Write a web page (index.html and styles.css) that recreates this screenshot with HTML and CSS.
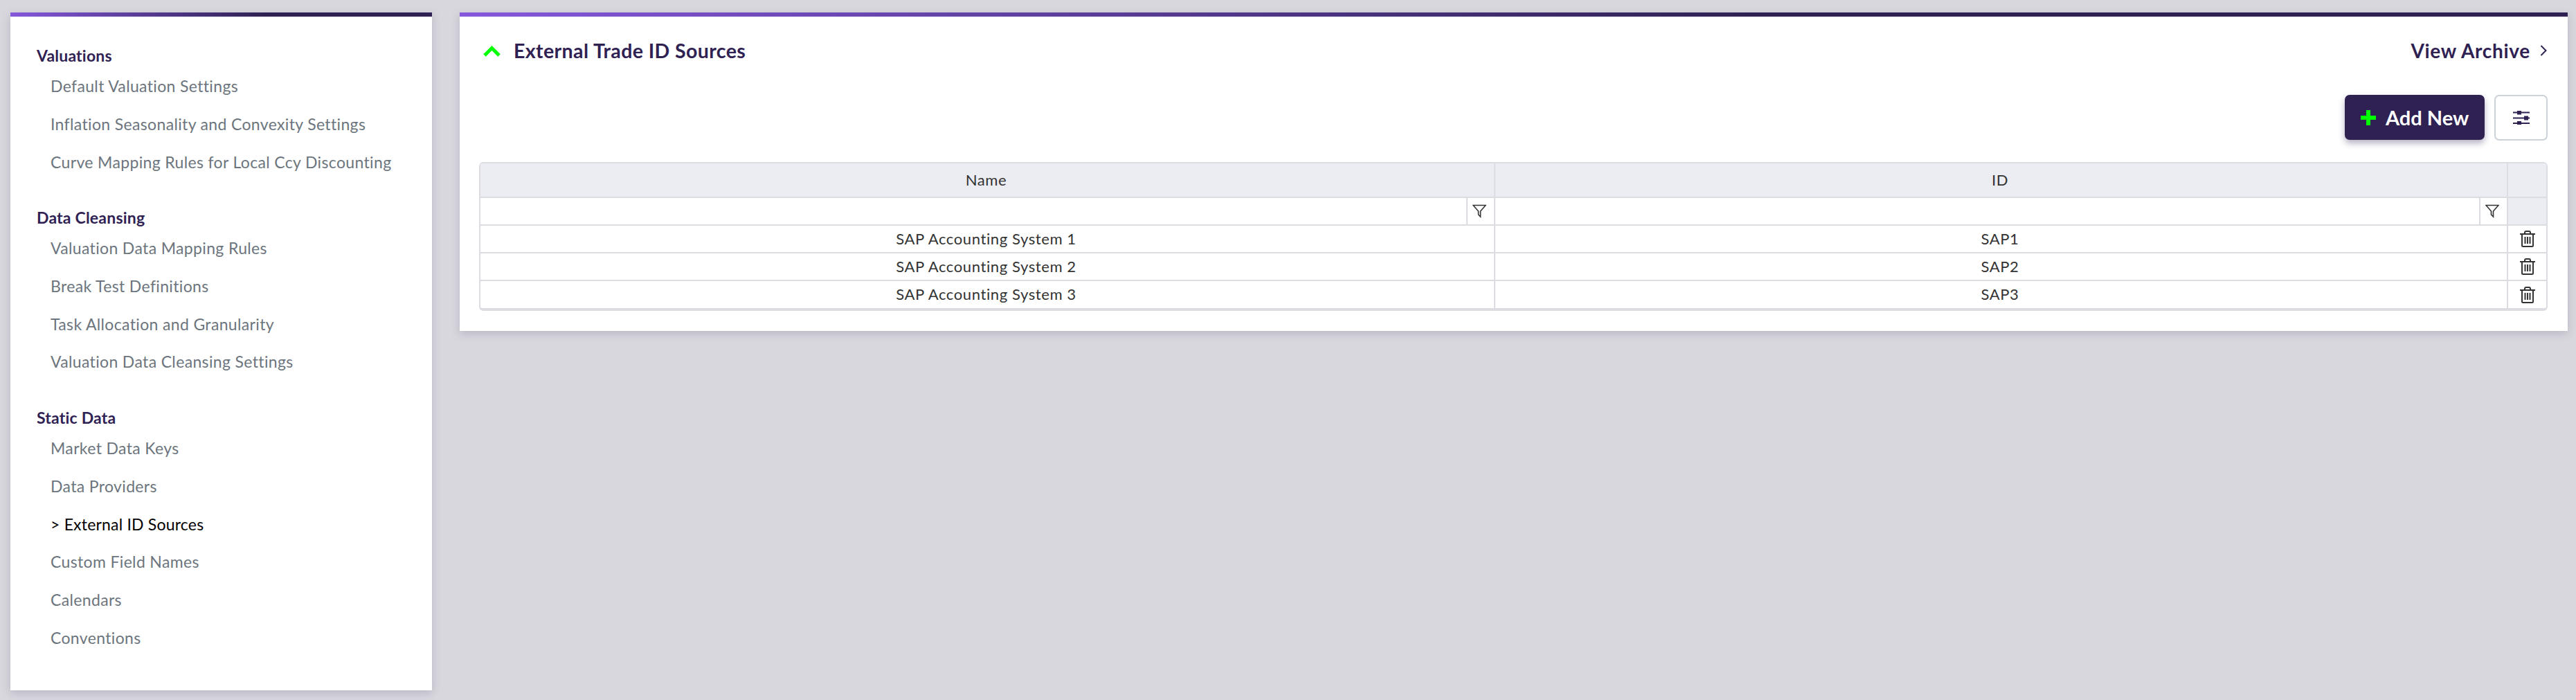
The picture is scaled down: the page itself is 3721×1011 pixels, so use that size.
FILE: index.html
```html
<!DOCTYPE html>
<html lang="en">
<head>
<meta charset="utf-8">
<title>External Trade ID Sources</title>
<link rel="stylesheet" href="styles.css">
</head>
<body>
<aside class="sidebar card">
  <section class="group">
    <h3>Valuations</h3>
    <a>Default Valuation Settings</a>
    <a>Inflation Seasonality and Convexity Settings</a>
    <a>Curve Mapping Rules for Local Ccy Discounting</a>
  </section>
  <section class="group">
    <h3>Data Cleansing</h3>
    <a>Valuation Data Mapping Rules</a>
    <a>Break Test Definitions</a>
    <a>Task Allocation and Granularity</a>
    <a>Valuation Data Cleansing Settings</a>
  </section>
  <section class="group">
    <h3>Static Data</h3>
    <a>Market Data Keys</a>
    <a>Data Providers</a>
    <a class="active">&gt; External ID Sources</a>
    <a>Custom Field Names</a>
    <a>Calendars</a>
    <a>Conventions</a>
  </section>
</aside>
<main class="panel card">
  <header class="panel-head">
    <svg class="chev-up" viewBox="0 0 25 16"><path d="M2 14 12.500 3.500 23 14" fill="none" stroke="#00ff00" stroke-width="5"/></svg>
    <h1>External Trade ID Sources</h1>
    <a class="archive">View Archive
      <svg class="chev-right" viewBox="0 0 10 16"><path d="M1.500 1 8.500 8 1.500 15" fill="none" stroke="#2f2253" stroke-width="2"/></svg>
    </a>
  </header>
  <div class="actions">
    <button class="add"><svg class="plus" viewBox="0 0 22 22"><path d="M8 0h6v8h8v6h-8v8H8v-8H0V8h8z" fill="#00ff00"/></svg>Add New</button>
    <button class="tune">
      <svg viewBox="0 0 24 20" class="sliders">
        <path d="M0 2.500h24M0 10.500h24M0 18h24" stroke="#2f2253" stroke-width="2"/>
        <rect x="6" y="0" width="6" height="5.500" fill="#2f2253"/>
        <rect x="16" y="7.500" width="6" height="6" fill="#2f2253"/>
        <rect x="6" y="15" width="6" height="6" fill="#2f2253"/>
      </svg>
    </button>
  </div>
  <div class="grid-wrap">
    <table class="grid">
      <colgroup><col class="c1"><col class="c2"><col class="c3"></colgroup>
      <thead>
        <tr class="h"><th>Name</th><th>ID</th><th></th></tr>
        <tr class="f">
          <td><div class="fcell"><span class="fbox"></span><span class="fbtn"><svg viewBox="0 0 20 20"><path d="M1 1.500h18l-7.500 8.500v8l-3-3v-5z" fill="none" stroke="#333" stroke-width="1.600"/></svg></span></div></td>
          <td><div class="fcell"><span class="fbox"></span><span class="fbtn"><svg viewBox="0 0 20 20"><path d="M1 1.500h18l-7.500 8.500v8l-3-3v-5z" fill="none" stroke="#333" stroke-width="1.600"/></svg></span></div></td>
          <td class="blank"></td>
        </tr>
      </thead>
      <tbody>
        <tr><td>SAP Accounting System 1</td><td>SAP1</td><td class="del"><svg class="trash" viewBox="0 0 22 24"><path d="M0 5h22M3 5v16.500Q3 23 4.500 23h13q1.500 0 1.500-1.500V5M7 5V3Q7 1 9 1h4q2 0 2 2v2M7.500 9v10M11 9v10M14.500 9v10" fill="none" stroke="#333" stroke-width="2"/></svg></td></tr>
        <tr><td>SAP Accounting System 2</td><td>SAP2</td><td class="del"><svg class="trash" viewBox="0 0 22 24"><path d="M0 5h22M3 5v16.500Q3 23 4.500 23h13q1.500 0 1.500-1.500V5M7 5V3Q7 1 9 1h4q2 0 2 2v2M7.500 9v10M11 9v10M14.500 9v10" fill="none" stroke="#333" stroke-width="2"/></svg></td></tr>
        <tr><td>SAP Accounting System 3</td><td>SAP3</td><td class="del"><svg class="trash" viewBox="0 0 22 24"><path d="M0 5h22M3 5v16.500Q3 23 4.500 23h13q1.500 0 1.500-1.500V5M7 5V3Q7 1 9 1h4q2 0 2 2v2M7.500 9v10M11 9v10M14.500 9v10" fill="none" stroke="#333" stroke-width="2"/></svg></td></tr>
      </tbody>
    </table>
  </div>
</main>
</body>
</html>
```
FILE: styles.css
```css
* { box-sizing: border-box; }
html, body { height: 100%; }
body {
  margin: 0;
  padding: 18px 12px 14px 15px;
  background: #d8d7de;
  display: flex;
  align-items: flex-start;
  gap: 40px;
  font-family: "Lato", "Liberation Sans", sans-serif;
  overflow: hidden;
}
.card {
  background: #fff;
  border-top: 6px solid #2f2253;
  box-shadow: 0 4px 12px rgba(60, 55, 90, 0.2);
}
.sidebar {
  flex: 0 0 609px;
  height: 979px;
  padding: 40px 38px 0;
  border-image: linear-gradient(90deg, #8558dc, #2f2253 60%) 1;
}
.group { margin-bottom: 48.500px; display: flex; flex-direction: column; }
.group h3 {
  margin: 0 0 12px;
  font-size: 23px;
  line-height: 32px;
  font-weight: 700;
  letter-spacing: 0.2px;
  color: #2f2253;
}
.group a {
  margin-left: 20px;
  font-size: 23px;
  line-height: 32px;
  letter-spacing: 0.35px;
  margin-bottom: 22.800px;
  color: #6c757d;
}
.group a:last-child { margin-bottom: 0; }
.group a.active { color: #000; letter-spacing: 0.2px; }
.panel {
  flex: 1 1 auto;
  height: 460px;
  border-image: linear-gradient(90deg, #8558dc, #2f2253 61%) 1;
  padding: 0 29px 30px 28px;
}
.panel-head {
  display: flex;
  align-items: center;
  height: 98px;
  margin: 0 0 0 6px;
}
.chev-up { width: 25px; height: 16px; margin-right: 19px; margin-top: 2px; }
.panel-head h1 {
  margin: 0;
  font-size: 28.500px;
  letter-spacing: 0.4px;
  font-weight: 700;
  color: #2f2253;
}
.archive {
  margin-left: auto;
  margin-right: 1px;
  display: flex;
  align-items: center;
  gap: 14px;
  font-size: 28px;
  letter-spacing: 0.7px;
  font-weight: 700;
  color: #2f2253;
}
.chev-right { width: 10px; height: 16px; }
.actions {
  display: flex;
  justify-content: flex-end;
  gap: 14px;
  height: 66px;
  margin-top: 15px;
  margin-bottom: 31px;
}
.actions button { font-family: inherit; padding: 0; cursor: pointer; }
.add {
  width: 202px;
  height: 65px;
  background: #2f2253;
  border: 0;
  border-radius: 7px;
  color: #fff;
  font-size: 29px;
  font-weight: 700;
  display: flex;
  align-items: center;
  gap: 14px;
  padding-left: 23px !important;
  box-shadow: 0 5px 10px rgba(47, 34, 83, 0.35);
}
.plus { width: 22px; height: 22px; }
.tune {
  width: 77px;
  height: 66px;
  background: #fff;
  border: 2px solid #cdd1d9;
  border-radius: 7px;
  display: flex;
  align-items: center;
  justify-content: center;
}
.sliders { width: 24px; height: 20px; }
.grid-wrap {
  border: 2px solid #dcdde3;
  border-bottom-width: 4px;
  border-radius: 6px;
  overflow: hidden;
}
.grid {
  width: 100%;
  table-layout: fixed;
  border-collapse: collapse;
  font-size: 22px;
  letter-spacing: 0.6px;
  color: #333;
}
.c1 { width: 1465px; }
.c3 { width: 56px; }
.grid th, .grid td {
  padding: 0 3px 2px 0;
  text-align: center;
  font-weight: 400;
  border-left: 2px solid #dcdde3;
  border-top: 2px solid #dcdde3;
}
.grid tr > :first-child { border-left: 0; }
.grid thead tr:first-child th { border-top: 0; }
.h th { height: 49px; background: #ecedf2; }
.grid .f td { height: 40px; padding: 0; }
.f td.blank { background: #ecedf2; }
.fcell { display: flex; height: 38px; }
.fbox { flex: 1; }
.fbtn {
  flex: 0 0 40px;
  border-left: 2px solid #dcdde3;
  padding-right: 5px;
  display: flex;
  align-items: center;
  justify-content: center;
}
.fbtn svg { width: 20px; height: 20px; }
.grid tbody td { height: 40px; }
.grid .del { padding: 0; }
.del svg { display: block; margin: 0 auto; }
.trash { width: 22px; height: 24px; }
```
